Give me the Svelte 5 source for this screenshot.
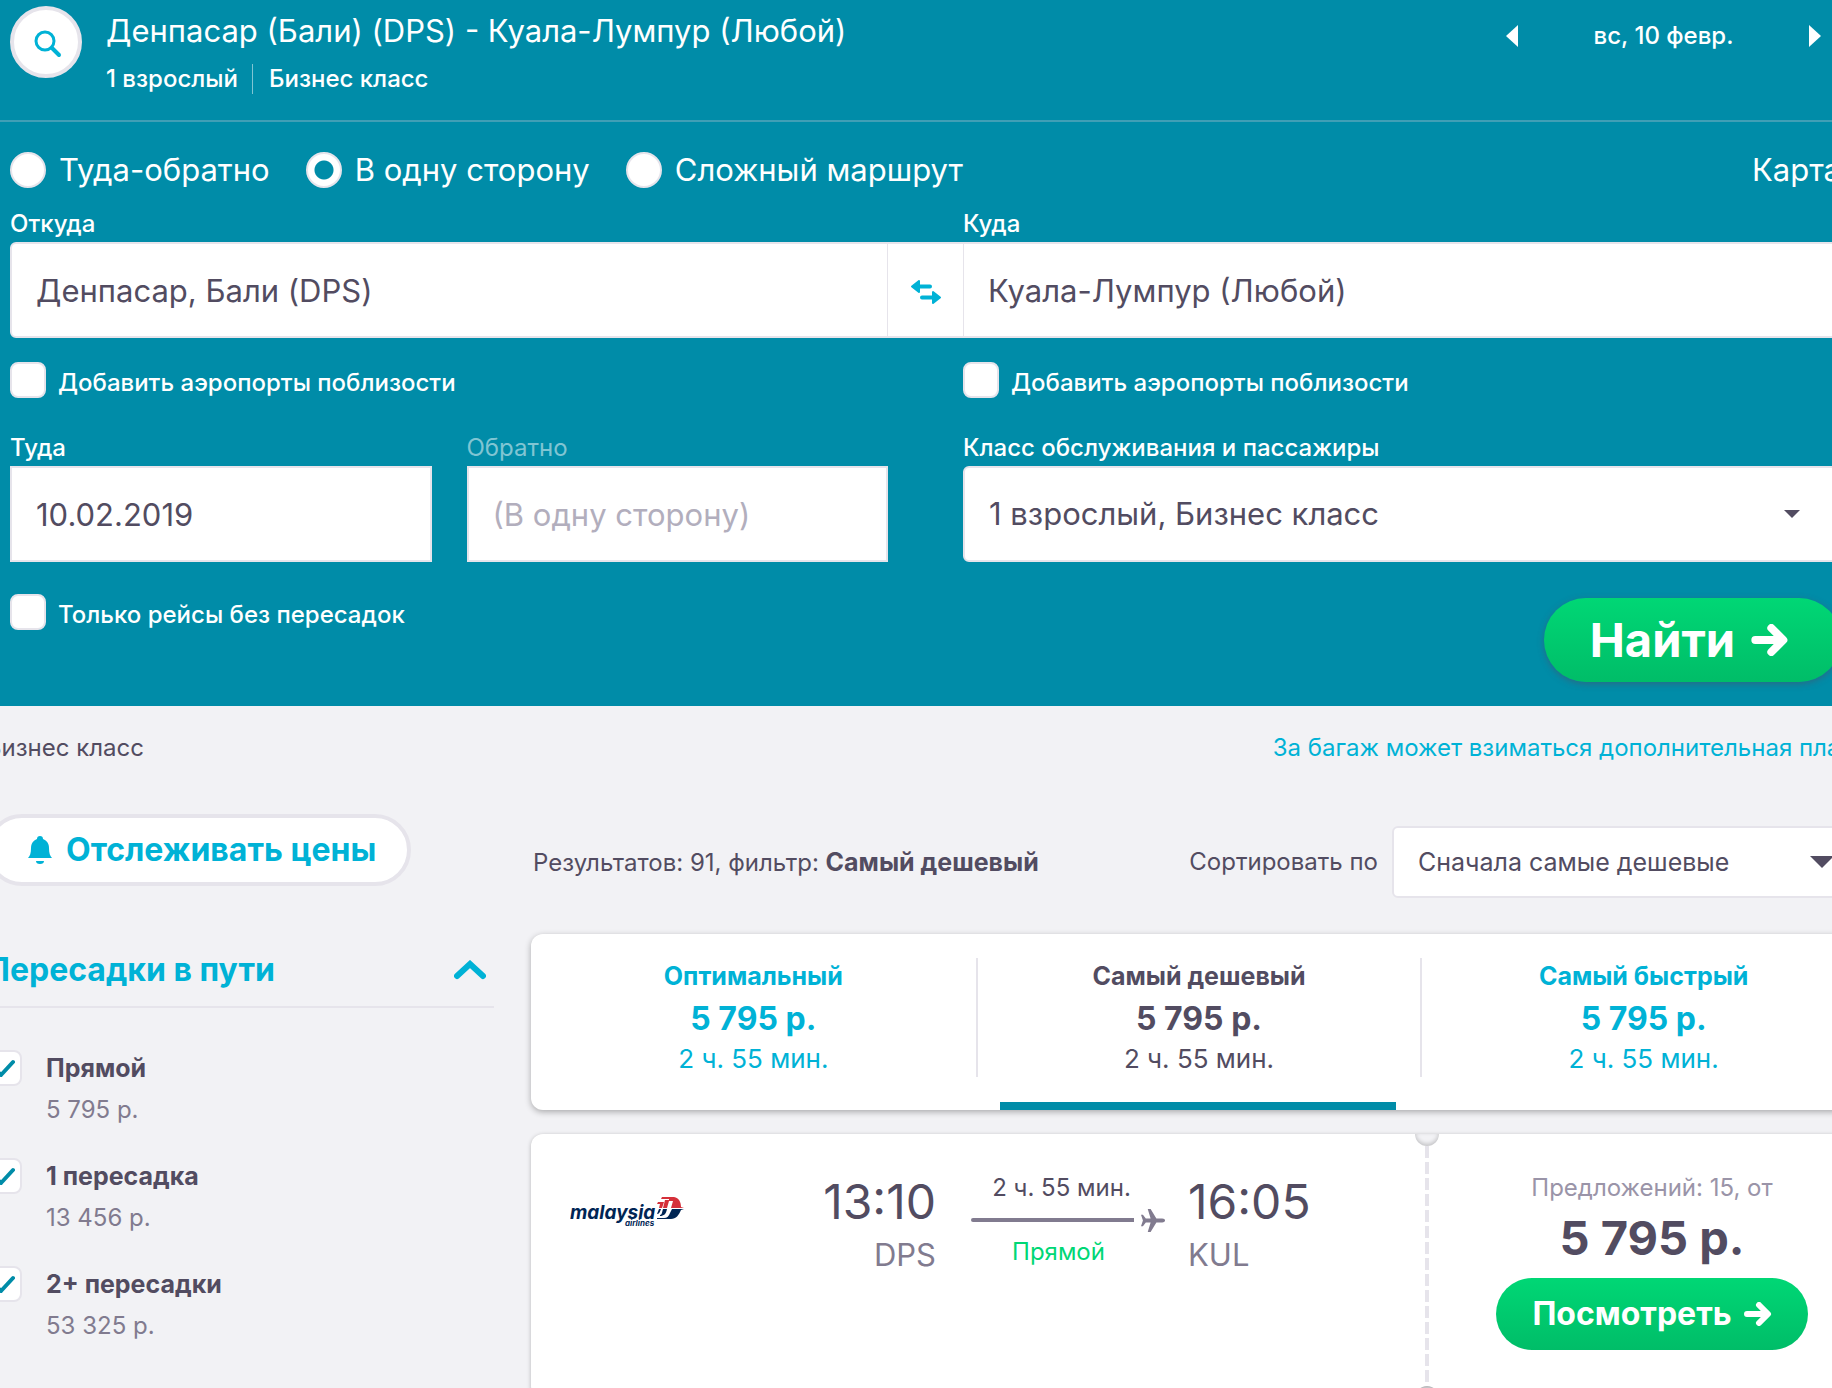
<script lang="ts">
  type Fare = { id: string; title: string; price: string; time: string };
  type Stop = { id: string; label: string; price: string; checked: boolean };

  const tripTypes = [
    { value: 'return', label: 'Туда-обратно' },
    { value: 'oneway', label: 'В одну сторону' },
    { value: 'multi', label: 'Сложный маршрут' }
  ];

  const fares: Fare[] = [
    { id: 'best', title: 'Оптимальный', price: '5 795 р.', time: '2 ч. 55 мин.' },
    { id: 'cheapest', title: 'Самый дешевый', price: '5 795 р.', time: '2 ч. 55 мин.' },
    { id: 'fastest', title: 'Самый быстрый', price: '5 795 р.', time: '2 ч. 55 мин.' }
  ];

  let tripType = $state('oneway');
  let activeFare = $state('cheapest');
  let stopsOpen = $state(true);
  let origin = $state('Денпасар, Бали (DPS)');
  let destination = $state('Куала-Лумпур (Любой)');

  let stops = $state<Stop[]>([
    { id: 'direct', label: 'Прямой', price: '5 795 р.', checked: true },
    { id: 'one', label: '1 пересадка', price: '13 456 р.', checked: true },
    { id: 'two', label: '2+ пересадки', price: '53 325 р.', checked: true }
  ]);

  function swapPlaces() {
    [origin, destination] = [destination, origin];
  }
</script>

{#snippet arrow()}
  <svg class="arrow" viewBox="0 0 28 24" aria-hidden="true">
    <path d="M3 12h20M15 3l9 9-9 9" />
  </svg>
{/snippet}

<div class="page">
  <header class="search">
    <div class="summary">
      <button class="search-toggle" aria-label="Изменить поиск">
        <svg viewBox="0 0 28 28" aria-hidden="true">
          <circle cx="11" cy="11" r="9" />
          <path class="handle" d="M18 18l7 7" />
        </svg>
      </button>
      <div class="route">
        <h1>Денпасар (Бали) (DPS) - Куала-Лумпур (Любой)</h1>
        <p><span>1 взрослый</span><span>Бизнес класс</span></p>
      </div>
      <div class="day-nav">
        <button aria-label="Предыдущий день">
          <svg viewBox="0 0 14 24" aria-hidden="true"><path d="M13 1v22L1 12z" /></svg>
        </button>
        <span>вс, 10 февр.</span>
        <button aria-label="Следующий день">
          <svg viewBox="0 0 14 24" aria-hidden="true"><path d="M1 1v22l12-11z" /></svg>
        </button>
      </div>
    </div>

    <form class="form" onsubmit={(e) => e.preventDefault()}>
      <div class="trip">
        {#each tripTypes as type (type.value)}
          <label>
            <input type="radio" name="trip" value={type.value} bind:group={tripType} />
            {type.label}
          </label>
        {/each}
        <a href="#map">Карта</a>
      </div>

      <div class="places">
        <label class="caption" for="origin">Откуда</label>
        <label class="caption to" for="destination">Куда</label>
        <input class="field from" id="origin" type="text" bind:value={origin} />
        <button class="swap" type="button" aria-label="Поменять местами" onclick={swapPlaces}>
          <svg viewBox="0 0 30 24" aria-hidden="true">
            <path d="M6 6.5h13M24 17.5H11" />
            <path class="head" d="M8 1v11L1 6.5zM22 12v11l7-5.5z" />
          </svg>
        </button>
        <input class="field dest" id="destination" type="text" bind:value={destination} />
      </div>

      <div class="halves">
        <label class="check"><input type="checkbox" /><span>Добавить аэропорты поблизости</span></label>
        <label class="check"><input type="checkbox" /><span>Добавить аэропорты поблизости</span></label>
      </div>

      <div class="halves details">
        <div class="dates">
          <div>
            <label class="caption" for="depart">Туда</label>
            <input class="field" id="depart" type="text" value="10.02.2019" />
          </div>
          <div>
            <label class="caption off" for="return">Обратно</label>
            <input class="field" id="return" type="text" placeholder="(В одну сторону)" />
          </div>
        </div>
        <div>
          <label class="caption" for="cabin">Класс обслуживания и пассажиры</label>
          <div class="select">
            <select class="field rounded" id="cabin">
              <option>1 взрослый, Бизнес класс</option>
            </select>
            <svg class="caret small" viewBox="0 0 18 10" aria-hidden="true"><path d="M1 1h16L9 9z" /></svg>
          </div>
        </div>
      </div>

      <div class="submit-row">
        <label class="check"><input type="checkbox" /><span>Только рейсы без пересадок</span></label>
        <button class="go find" type="submit">Найти {@render arrow()}</button>
      </div>
    </form>
  </header>

  <main class="results">
    <div class="notes">
      <span>Бизнес класс</span>
      <a href="#baggage">За багаж может взиматься дополнительная плата</a>
    </div>

    <div class="columns">
      <aside>
        <button class="track">
          <svg viewBox="0 0 24 28" aria-hidden="true">
            <path d="M12 0a3 3 0 0 1 3 3c4 1.5 6 5 6 9 0 5 1 8 3 10H0c2-2 3-5 3-10 0-4 2-7.500 6-9a3 3 0 0 1 3-3zM8 25h8a4 3 0 0 1-8 0z" />
          </svg>
          Отслеживать цены
        </button>

        <button class="group" aria-expanded={stopsOpen} onclick={() => (stopsOpen = !stopsOpen)}>
          Пересадки в пути
          <svg class:closed={!stopsOpen} viewBox="0 0 32 20" aria-hidden="true"><path d="M3 16L16 4l13 12" /></svg>
        </button>

        {#if stopsOpen}
          <div class="stops">
            {#each stops as stop (stop.id)}
              <label class="stop">
                <input type="checkbox" bind:checked={stop.checked} />
                <span>
                  <strong>{stop.label}</strong>
                  <small>{stop.price}</small>
                </span>
              </label>
            {/each}
          </div>
        {/if}
      </aside>

      <section>
        <div class="toolbar">
          <p>Результатов: 91, фильтр: <strong>Самый дешевый</strong></p>
          <div class="sort">
            <label for="sort">Сортировать по</label>
            <div class="select">
              <select id="sort">
                <option>Сначала самые дешевые</option>
              </select>
              <svg class="caret" viewBox="0 0 26 14" aria-hidden="true"><path d="M1 1h24L13 13z" /></svg>
            </div>
          </div>
        </div>

        <div class="fares">
          {#each fares as fare (fare.id)}
            <button class:active={activeFare === fare.id} onclick={() => (activeFare = fare.id)}>
              <span class="fare">
                <strong>{fare.title}</strong>
                <b>{fare.price}</b>
                <span>{fare.time}</span>
              </span>
            </button>
          {/each}
        </div>

        <article class="ticket">
          <div class="leg">
            <svg class="airline" viewBox="0 0 116 32" role="img" aria-label="Malaysia Airlines">
              <text class="brand" x="0" y="23">malaysia</text>
              <text class="sub" x="55" y="30">airlines</text>
              <path class="red" d="M92 1h12c5 1 7 5 7 10l3 1H101l2-7h-4l-2 7h-4l2-8h4v-1h-8zM88 6h6l-2 6h-3l1-4h-3z" />
              <path class="navy" d="M102 13h12l-3 1c-2 5-5 9-10 9H87v-1h7c3 0 5-2 6-5zM93 13h4c-1 5-3 7-7 7v-1c2 0 2-3 3-6zM89 13h2c-1 3-2 5-4 5z" />
            </svg>
            <div class="stop-info depart">
              <time>13:10</time>
              <abbr title="Денпасар">DPS</abbr>
            </div>
            <div class="flight">
              <span>2 ч. 55 мин.</span>
              <div class="path">
                <i></i>
                <svg viewBox="0 0 26 26" aria-hidden="true">
                  <path d="M25 13c0-1-1-2-3-2h-6L10 1H7l3 10H5L2 7H0l2 6-2 6h2l3-4h5L7 25h3l6-10h6c2 0 3-1 3-2z" />
                </svg>
              </div>
              <em>Прямой</em>
            </div>
            <div class="stop-info">
              <time>16:05</time>
              <abbr title="Куала-Лумпур">KUL</abbr>
            </div>
          </div>
          <div class="tear"></div>
          <div class="deal">
            <span>Предложений: 15, от</span>
            <b>5 795 р.</b>
            <button class="go">Посмотреть {@render arrow()}</button>
          </div>
        </article>
      </section>
    </div>
  </main>
</div>

<style>
  :global(body) {
    margin: 0;
    background: #f2f2f5;
  }

  .page {
    --teal: #008ca8;
    --cyan: #00b2d6;
    --ink: #524c61;
    --muted: #817b8f;
    --line: #e6e4eb;
    overflow: hidden;
    color: var(--ink);
    font-family: Inter, 'Liberation Sans', sans-serif;
    font-size: 24px;
    line-height: 32px;
  }

  *,
  *::before,
  *::after {
    box-sizing: border-box;
  }

  button,
  input,
  select {
    font: inherit;
    color: inherit;
  }

  button {
    padding: 0;
    border: 0;
    background: none;
    cursor: pointer;
  }

  h1,
  p {
    margin: 0;
  }

  a {
    text-decoration: none;
  }

  svg {
    display: block;
    flex: none;
    fill: currentColor;
  }

  /* search header */
  .search {
    background: var(--teal);
    color: #fff;
  }

  .summary {
    display: flex;
    align-items: flex-start;
    height: 122px;
    padding: 6px 10px;
    border-bottom: 2px solid #409fb6;
  }

  .search-toggle {
    display: grid;
    place-items: center;
    width: 72px;
    height: 72px;
    margin-right: 24px;
    padding: 4px 0 0 4px;
    border: 4px solid var(--line);
    border-radius: 50%;
    background: #fff;
    color: var(--cyan);
  }

  .search-toggle svg {
    width: 28px;
    height: 28px;
    fill: none;
    stroke: currentColor;
    stroke-width: 3;
    stroke-linecap: round;
  }

  .search-toggle .handle {
    stroke-width: 4;
  }

  .route {
    flex: 1;
  }

  .route h1 {
    font-size: 31px;
    font-weight: 400;
    line-height: 50px;
  }

  .route p {
    display: flex;
    padding-top: 8px;
    font-weight: 500;
    line-height: 30px;
  }

  .route p span + span {
    margin-left: 14px;
    padding-left: 16px;
    border-left: 1px solid #80c5d3;
  }

  .day-nav {
    display: flex;
    align-items: center;
    justify-content: space-between;
    width: 317px;
    padding-top: 14px;
    font-weight: 500;
  }

  .day-nav svg {
    width: 14px;
    height: 24px;
  }

  .form {
    margin: 0 -9px 0 10px;
    padding: 24px 0;
  }

  .trip {
    display: flex;
    gap: 36px;
    align-items: center;
    height: 48px;
    font-size: 31px;
  }

  .trip label {
    display: flex;
    align-items: center;
    gap: 13px;
  }

  .trip a {
    margin-left: auto;
    color: inherit;
  }

  .trip input {
    appearance: none;
    width: 36px;
    height: 36px;
    margin: 0;
    border: 2px solid var(--line);
    border-radius: 50%;
    background: #fff;
  }

  .trip input:checked {
    background: radial-gradient(var(--teal) 9px, #fff 10px);
  }

  .caption {
    display: block;
    height: 48px;
    padding-top: 14px;
    font-weight: 500;
    line-height: 32px;
  }

  .caption.off {
    color: #80c5d3;
    font-weight: 400;
  }

  .places {
    display: grid;
    grid-template-columns: 1fr 75px 1fr;
  }

  .caption.to {
    grid-column: 3;
  }

  .field {
    display: block;
    width: 100%;
    height: 96px;
    margin: 0;
    padding: 0 24px;
    border: 2px solid var(--line);
    border-radius: 0;
    background: #fff;
    color: var(--ink);
    font-size: 31px;
  }

  .field::placeholder {
    color: #b2aebd;
    opacity: 1;
  }

  .field.from {
    border-right-width: 1px;
    border-radius: 6px 0 0 6px;
  }

  .field.dest {
    border-left-width: 1px;
  }

  .field.rounded {
    border-radius: 6px;
  }

  .swap {
    display: grid;
    place-items: center;
    padding-top: 4px;
    border: solid var(--line);
    border-width: 2px 0;
    background: #fff;
    color: var(--cyan);
  }

  .swap svg {
    width: 30px;
    height: 24px;
    stroke: currentColor;
    stroke-width: 4;
    stroke-linecap: round;
    stroke-linejoin: round;
  }

  .swap .head {
    stroke-width: 2;
  }

  .halves {
    display: grid;
    grid-template-columns: 1fr 1fr;
    gap: 75px;
    padding-top: 24px;
  }

  .halves.details {
    padding-top: 20px;
  }

  .dates {
    display: grid;
    grid-template-columns: 1fr 1fr;
    gap: 35px;
  }

  .check {
    display: flex;
    gap: 12px;
    height: 36px;
    font-weight: 500;
  }

  .check span {
    padding-top: 5px;
  }

  .check input,
  .stop input {
    appearance: none;
    flex: none;
    width: 36px;
    height: 36px;
    margin: 0;
    border: 2px solid var(--line);
    border-radius: 8px;
    background: #fff;
  }

  .check input:checked,
  .stop input:checked {
    background: #fff url("data:image/svg+xml,%3Csvg xmlns='http://www.w3.org/2000/svg' viewBox='0 0 32 32' fill='none' stroke='%23008ca8' stroke-width='4' stroke-linecap='round' stroke-linejoin='round'%3E%3Cpath d='M7 17l6 6 12-13'/%3E%3C/svg%3E") center / 32px no-repeat;
  }

  .select {
    display: grid;
    align-items: center;
  }

  .select select,
  .select .caret {
    grid-area: 1 / 1;
  }

  .select select {
    appearance: none;
  }

  .caret {
    justify-self: end;
    width: 26px;
    height: 14px;
    margin-right: 30px;
    color: var(--ink);
    pointer-events: none;
  }

  .caret.small {
    width: 18px;
    height: 10px;
    margin-right: 40px;
  }

  .submit-row {
    display: flex;
    align-items: flex-start;
    justify-content: space-between;
    padding-top: 36px;
  }

  .submit-row .check {
    margin-top: -4px;
  }

  .go {
    display: flex;
    align-items: center;
    justify-content: center;
    gap: 12px;
    height: 72px;
    padding: 0 36px;
    border-radius: 42px;
    background: linear-gradient(#00d775, #00bd68);
    color: #fff;
    font-size: 32px;
    font-weight: 700;
  }

  .arrow {
    width: 28px;
    height: 24px;
    fill: none;
    stroke: currentColor;
    stroke-width: 6;
    stroke-linecap: round;
    stroke-linejoin: round;
  }

  .go.find {
    gap: 16px;
    height: 84px;
    padding: 0 52px 0 46px;
    box-shadow: 0 2px 6px rgba(82, 76, 97, 0.5);
    font-size: 47px;
  }

  .find .arrow {
    width: 38px;
    height: 32px;
  }

  /* results */
  .results {
    margin: 0 -33px 0 -14px;
  }

  .notes {
    display: flex;
    justify-content: space-between;
    padding: 26px 0 0;
  }

  .notes a {
    color: var(--cyan);
    white-space: nowrap;
  }

  .columns {
    display: grid;
    grid-template-columns: 508px 1fr;
    gap: 37px;
    padding-top: 50px;
  }

  .track {
    display: flex;
    align-items: center;
    gap: 14px;
    height: 72px;
    padding: 0 31px 0 38px;
    border: 4px solid var(--line);
    border-radius: 36px;
    background: #fff;
    color: var(--cyan);
    font-size: 32px;
    font-weight: 700;
    white-space: nowrap;
  }

  .track svg {
    width: 24px;
    height: 28px;
  }

  .group {
    display: flex;
    align-items: center;
    justify-content: space-between;
    width: 100%;
    height: 74px;
    margin: 48px 0 42px;
    padding-right: 8px;
    border-bottom: 2px solid var(--line);
    color: var(--cyan);
    font-size: 32px;
    font-weight: 700;
  }

  .group svg {
    width: 32px;
    height: 20px;
    fill: none;
    stroke: currentColor;
    stroke-width: 6;
    stroke-linecap: round;
  }

  .group svg.closed {
    transform: rotate(180deg);
  }

  .stops {
    display: grid;
    gap: 28px;
  }

  .stop {
    display: flex;
    gap: 24px;
    height: 80px;
  }

  .stop strong,
  .stop small {
    display: block;
  }

  .stop strong {
    font-size: 25px;
    line-height: 36px;
  }

  .stop small {
    padding-top: 4px;
    color: var(--muted);
    font-size: 24px;
    line-height: 40px;
  }

  .toolbar {
    display: flex;
    align-items: center;
    justify-content: space-between;
    height: 72px;
    margin-top: 12px;
    padding-left: 2px;
  }

  .toolbar strong {
    font-size: 25px;
  }

  .sort {
    display: flex;
    align-items: center;
    gap: 14px;
  }

  .sort select {
    width: 473px;
    height: 72px;
    padding: 0 24px;
    border: 2px solid var(--line);
    border-radius: 6px;
    background: #fff;
    font-size: 25px;
  }

  .fares {
    display: grid;
    grid-template-columns: repeat(3, 1fr);
    height: 176px;
    margin-top: 36px;
    padding: 24px 0 0;
    border-radius: 12px;
    background: #fff;
    box-shadow: 0 2px 6px rgba(0, 0, 0, 0.3);
  }

  .fares button {
    display: flex;
    flex-direction: column;
    justify-content: space-between;
    color: var(--cyan);
  }

  .fares button.active {
    color: var(--ink);
  }

  .fares button::after {
    content: '';
    align-self: center;
    width: calc(100% - 48px);
    height: 8px;
  }

  .fares button.active::after {
    background: var(--teal);
  }

  .fare {
    width: 100%;
    height: 119px;
    padding-top: 2px;
  }

  .fares button + button .fare {
    border-left: 2px solid var(--line);
  }

  .fare strong,
  .fare b,
  .fare span {
    display: block;
  }

  .fare strong {
    font-size: 25px;
  }

  .fare b {
    padding-top: 3px;
    font-size: 32px;
    line-height: 48px;
  }

  .fare span {
    font-size: 26px;
  }

  .ticket {
    display: flex;
    height: 264px;
    margin-top: 24px;
    border-radius: 12px;
    background: #fff;
    box-shadow: 0 1px 4px rgba(0, 0, 0, 0.25);
  }

  .leg {
    display: flex;
    flex: 1;
    align-items: flex-start;
    padding: 40px 101px 0 39px;
  }

  .airline {
    width: 116px;
    height: 32px;
    margin: 22px auto 0 0;
  }

  .airline text {
    fill: #002554;
    font-style: italic;
    font-weight: 700;
  }

  .airline .brand {
    font-size: 19px;
  }

  .airline .sub {
    font-size: 8px;
  }

  .airline .red {
    fill: #d5303a;
  }

  .airline .navy {
    fill: #002554;
  }

  .stop-info {
    width: 126px;
  }

  .stop-info.depart {
    text-align: right;
  }

  .stop-info time,
  .stop-info abbr {
    display: block;
    font-size: 31px;
    line-height: 50px;
    text-decoration: none;
  }

  .stop-info time {
    font-size: 48px;
    line-height: 56px;
  }

  .stop-info abbr {
    color: var(--muted);
  }

  .flight {
    width: 195px;
    margin: 0 22px 0 35px;
    text-align: center;
  }

  .flight > span,
  .flight > em {
    display: block;
    padding-right: 14px;
    font-style: normal;
    line-height: 28px;
  }

  .flight > em {
    padding-right: 20px;
    color: #00d775;
  }

  .path {
    display: flex;
    align-items: center;
    gap: 7px;
    height: 36px;
    color: var(--muted);
  }

  .path i {
    flex: 1;
    height: 4px;
    border-radius: 2px 0 0 2px;
    background: currentColor;
  }

  .path svg {
    width: 25px;
    height: 25px;
  }

  /* perforated edge between the legs and the price */
  .tear {
    display: flex;
    flex-direction: column;
    align-items: center;
    justify-content: space-between;
    width: 24px;
    overflow: hidden;
    background: repeating-linear-gradient(var(--line) 0 12px, #fff 12px 16px) center 12px / 4px 240px no-repeat;
  }

  .tear::before,
  .tear::after {
    content: '';
    width: 24px;
    height: 12px;
    border-radius: 0 0 12px 12px;
    background: #f2f2f5;
    box-shadow: inset 0 -2px 4px rgba(0, 0, 0, 0.2);
  }

  .tear::after {
    border-radius: 12px 12px 0 0;
    box-shadow: inset 0 2px 4px rgba(0, 0, 0, 0.3);
  }

  .deal {
    display: flex;
    flex-direction: column;
    align-items: center;
    width: 426px;
    padding-top: 38px;
  }

  .deal > span {
    color: #9a94a8;
  }

  .deal b {
    padding-top: 4px;
    font-size: 47px;
    line-height: 60px;
  }

  .deal .go {
    margin-top: 10px;
  }
</style>
